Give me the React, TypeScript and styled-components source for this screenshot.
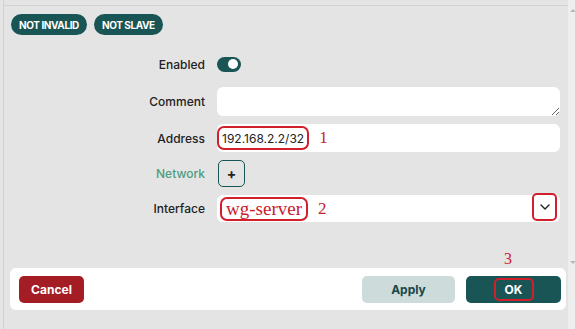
import React from "react";
import styled, { createGlobalStyle } from "styled-components";

const Global = createGlobalStyle`
  html, body { margin: 0; padding: 0; background: #e4e4e4; }
  body { font-family: Inter, "Liberation Sans", Arial, sans-serif; }
`;

const Screen = styled.div`
  width: 575px;
  height: 329px;
  display: flex;
  overflow: hidden;
  background: #e4e4e4;
`;

const Main = styled.div`
  flex: 1;
  margin-left: 3px;
  border-left: 1px solid #d2d2d2;
  display: flex;
  flex-direction: column;
`;

const TopLine = styled.div`
  margin-top: 5px;
  border-top: 1px solid #d2d2d2;
`;

const Scrollbar = styled.div`
  width: 7px;
  background: #eeeeee;
  position: relative;
  &::before, &::after {
    content: "";
    position: absolute;
    left: 2px;
    border-left: 3px solid transparent;
    border-right: 3px solid transparent;
  }
  &::before { top: 9px; border-bottom: 3px solid #b8b8b8; }
  &::after { top: 261px; border-top: 3px solid #b8b8b8; }
`;

const Badges = styled.div`
  display: flex;
  gap: 7px;
  padding: 8px 0 0 7px;
`;

const Badge = styled.span`
  height: 21px;
  padding: 0 8px;
  border-radius: 11px;
  background: #1a5556;
  color: #fff;
  font-size: 10px;
  font-weight: 700;
  letter-spacing: -0.4px;
  display: flex;
  align-items: center;
`;

const Form = styled.div`
  margin-top: 14px;
  display: grid;
  grid-template-columns: 201px 343px;
  grid-template-rows: 30px 29px 28px 27px 27px;
  column-gap: 12px;
  row-gap: 8px;
  align-items: center;
`;

const Label = styled.label<{ $muted?: boolean }>`
  justify-self: end;
  font-size: 12px;
  font-weight: 500;
  color: ${(p) => (p.$muted ? "#4f9c80" : "#222")};
`;

const Toggle = styled.span`
  width: 24px;
  height: 15px;
  border-radius: 8px;
  background: #1a5556;
  position: relative;
  &::after {
    content: "";
    position: absolute;
    right: 3px;
    top: 2.5px;
    width: 10px;
    height: 10px;
    border-radius: 50%;
    background: #fff;
  }
`;

const TextArea = styled.textarea`
  box-sizing: border-box;
  height: 29px;
  width: 100%;
  border: none;
  border-radius: 6px;
  background: #fff;
  resize: vertical;
  margin: 0;
  display: block;
`;

const Field = styled.div`
  box-sizing: border-box;
  height: 100%;
  background: #fff;
  border-radius: 6px;
  display: flex;
  align-items: center;
  position: relative;
`;

const Marked = styled.span<{ $serif?: boolean }>`
  box-sizing: border-box;
  height: 24px;
  display: flex;
  align-items: center;
  border: 2px solid #d21f2b;
  border-radius: 7px;
  margin-left: ${(p) => (p.$serif ? "3px" : "0")};
  padding: ${(p) => (p.$serif ? "0 4px" : "0 3px")};
  font-family: ${(p) =>
    p.$serif ? `"Liberation Serif", "Times New Roman", serif` : "inherit"};
  font-size: ${(p) => (p.$serif ? "19px" : "12px")};
  color: ${(p) => (p.$serif ? "#c8202b" : "#222")};
`;

const Note = styled.span`
  font-family: "Liberation Serif", "Times New Roman", serif;
  font-size: 17px;
  color: #c8202b;
  margin-left: 10px;
`;

const PlusButton = styled.button`
  width: 27px;
  height: 27px;
  margin-left: 1px;
  border: 1px solid #1a5556;
  border-radius: 5px;
  background: transparent;
  font: 700 14px Inter, sans-serif;
  color: #222;
  padding: 0;
`;

const ChevronBox = styled.span`
  position: absolute;
  right: 3px;
  top: -2px;
  width: 25px;
  height: 28px;
  box-sizing: border-box;
  border: 2px solid #d21f2b;
  border-radius: 5px;
  display: flex;
  align-items: center;
  justify-content: center;
`;

const Footer = styled.div`
  margin: 46px 2px 0 6px;
  height: 42px;
  box-sizing: border-box;
  background: #fff;
  border-radius: 6px;
  display: flex;
  align-items: center;
  padding: 0 5px 0 9px;
  gap: 11px;
`;

const Button = styled.button<{ $kind: "cancel" | "apply" | "ok" }>`
  height: 27px;
  border: none;
  border-radius: 5px;
  font: 700 12px Inter, "Liberation Sans", sans-serif;
  position: relative;
  padding: 0;
  width: ${(p) => (p.$kind === "cancel" ? "65px" : p.$kind === "apply" ? "93px" : "95px")};
  margin-right: ${(p) => (p.$kind === "cancel" ? "auto" : "0")};
  background: ${(p) =>
    p.$kind === "cancel" ? "#a51d24" : p.$kind === "apply" ? "#cddbda" : "#1a5556"};
  color: ${(p) => (p.$kind === "apply" ? "#1a4747" : "#fff")};
  display: flex;
  align-items: center;
  justify-content: center;
`;

const OkMark = styled.span`
  box-sizing: border-box;
  width: 40px;
  height: 23px;
  border: 2px solid #d21f2b;
  border-radius: 5px;
  display: flex;
  align-items: center;
  justify-content: center;
`;

const Three = styled.span`
  position: absolute;
  top: -26px;
  left: 38px;
  font: 400 16px "Liberation Serif", serif;
  color: #c8202b;
`;

const Chevron = () => (
  <svg width="10" height="6" viewBox="0 0 10 6" fill="none">
    <path d="M1 1l4 4 4-4" stroke="#222" strokeWidth="1.4" strokeLinecap="round" strokeLinejoin="round" />
  </svg>
);

const App = () => (
  <>
    <Global />
    <Screen>
      <Main>
        <TopLine />
        <Badges>
          <Badge>NOT INVALID</Badge>
          <Badge>NOT SLAVE</Badge>
        </Badges>
        <Form>
          <Label>Enabled</Label>
          <Toggle />
          <Label>Comment</Label>
          <TextArea />
          <Label>Address</Label>
          <Field>
            <Marked>192.168.2.2/32</Marked>
            <Note>1</Note>
          </Field>
          <Label $muted>Network</Label>
          <PlusButton>+</PlusButton>
          <Label>Interface</Label>
          <Field>
            <Marked $serif>wg-server</Marked>
            <Note>2</Note>
            <ChevronBox>
              <Chevron />
            </ChevronBox>
          </Field>
        </Form>
        <Footer>
          <Button $kind="cancel">Cancel</Button>
          <Button $kind="apply">Apply</Button>
          <Button $kind="ok">
            <Three>3</Three>
            <OkMark>OK</OkMark>
          </Button>
        </Footer>
      </Main>
      <Scrollbar />
    </Screen>
  </>
);

export default App;
